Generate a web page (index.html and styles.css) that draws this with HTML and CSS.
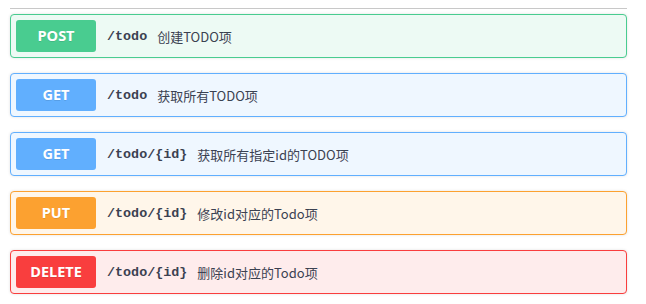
FILE: index.html
```html
<!DOCTYPE html>
<html>
<head>
<meta charset="utf-8">
<link rel="stylesheet" href="styles.css">
</head>
<body>
<div class="wrap">
  <div class="rule"></div>
  <div class="op post">
    <span class="method">POST</span>
    <span class="path">/todo</span>
    <span class="desc">创建TODO项</span>
  </div>
  <div class="op get">
    <span class="method">GET</span>
    <span class="path">/todo</span>
    <span class="desc">获取所有TODO项</span>
  </div>
  <div class="op get">
    <span class="method">GET</span>
    <span class="path">/todo/{id}</span>
    <span class="desc">获取所有指定id的TODO项</span>
  </div>
  <div class="op put">
    <span class="method">PUT</span>
    <span class="path">/todo/{id}</span>
    <span class="desc">修改id对应的Todo项</span>
  </div>
  <div class="op delete">
    <span class="method">DELETE</span>
    <span class="path">/todo/{id}</span>
    <span class="desc">删除id对应的Todo项</span>
  </div>
</div>
</body>
</html>
```

FILE: styles.css
```css
html, body {
  margin: 0;
  padding: 0;
  background: #fff;
}
.wrap {
  width: 617px;
  margin-left: 10px;
  padding-top: 8px;
}
.rule {
  height: 1px;
  background: #c8c8c8;
  margin-bottom: 5px;
}
.op {
  display: flex;
  align-items: center;
  height: 44px;
  box-sizing: border-box;
  padding: 0 5px;
  border: 1px solid;
  border-radius: 4px;
  margin-bottom: 15px;
  box-shadow: 0 0 3px rgba(0,0,0,0.12);
}
.method {
  width: 80px;
  height: 32px;
  line-height: 32px;
  border-radius: 3px;
  color: #fff;
  text-align: center;
  font-family: "Open Sans", "Noto Sans CJK SC", sans-serif;
  font-weight: 700;
  font-size: 14.5px;
  text-shadow: 0 1px 0 rgba(0,0,0,0.1);
  flex: none;
}
.path {
  margin-left: 11px;
  font-family: "Liberation Mono", "Noto Sans CJK SC", monospace;
  font-weight: 700;
  font-size: 13.4px;
  color: #3b4151;
}
.desc {
  margin-left: 10px;
  font-family: "Noto Sans CJK SC", sans-serif;
  font-size: 13px;
  color: #3b4151;
}
.post { border-color: #49cc90; background: #edfaf4; }
.post .method { background: #49cc90; }
.get { border-color: #61affe; background: #eff7ff; }
.get .method { background: #61affe; }
.put { border-color: #fca130; background: #fff6ea; }
.put .method { background: #fca130; }
.delete { border-color: #f93e3e; background: #feecec; }
.delete .method { background: #f93e3e; }
```
